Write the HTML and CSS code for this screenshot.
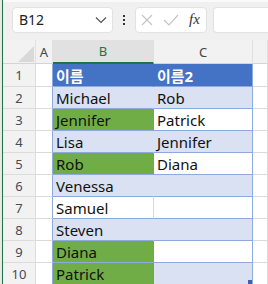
FILE: index.html
```html
<!DOCTYPE html>
<html lang="ko">
<head>
    <meta charset="UTF-8">
    <title>Sheet</title>
    <link rel="stylesheet" href="styles.css">
</head>
<body>
    <div class="app">
        <div class="edge"></div>
        <div class="main">
            <div class="formula-bar">
                <div class="name-box">
                    <span>B12</span>
                    <svg class="chevron" width="12" height="8" viewBox="0 0 12 8"><path d="M1 1.5 L6 6.5 L11 1.5" fill="none" stroke="#555" stroke-width="1.2"/></svg>
                </div>
                <div class="dots"><i></i><i></i><i></i></div>
                <div class="fn-box">
                    <svg width="14" height="14" viewBox="0 0 14 14"><path d="M2 2 L12 12 M12 2 L2 12" stroke="#c4c4c4" stroke-width="1.2"/></svg>
                    <svg width="16" height="14" viewBox="0 0 16 14"><path d="M1 7 L6 12 L15 2" fill="none" stroke="#c4c4c4" stroke-width="1.2"/></svg>
                    <span class="fx">fx</span>
                </div>
                <div class="input-box"></div>
            </div>

            <div class="row col-head">
                <div class="cell corner"><svg width="16" height="16" viewBox="0 0 16 16"><path d="M16 0 L16 16 L0 16 Z" fill="#d9d9d9"/></svg></div>
                <div class="cell">A</div>
                <div class="cell selected">B</div>
                <div class="cell">C</div>
                <div class="cell"></div>
            </div>

            <div class="row head">
                <div class="cell num">1</div>
                <div class="cell a"></div>
                <div class="cell b">이름</div>
                <div class="cell c">이름2</div>
                <div class="cell"></div>
            </div>
            <div class="row band">
                <div class="cell num">2</div>
                <div class="cell a"></div>
                <div class="cell b">Michael</div>
                <div class="cell c">Rob</div>
                <div class="cell"></div>
            </div>
            <div class="row plain">
                <div class="cell num">3</div>
                <div class="cell a"></div>
                <div class="cell b green">Jennifer</div>
                <div class="cell c">Patrick</div>
                <div class="cell"></div>
            </div>
            <div class="row band">
                <div class="cell num">4</div>
                <div class="cell a"></div>
                <div class="cell b">Lisa</div>
                <div class="cell c">Jennifer</div>
                <div class="cell"></div>
            </div>
            <div class="row plain">
                <div class="cell num">5</div>
                <div class="cell a"></div>
                <div class="cell b green">Rob</div>
                <div class="cell c">Diana</div>
                <div class="cell"></div>
            </div>
            <div class="row band">
                <div class="cell num">6</div>
                <div class="cell a"></div>
                <div class="cell b">Venessa</div>
                <div class="cell c"></div>
                <div class="cell"></div>
            </div>
            <div class="row plain">
                <div class="cell num">7</div>
                <div class="cell a"></div>
                <div class="cell b">Samuel</div>
                <div class="cell c"></div>
                <div class="cell"></div>
            </div>
            <div class="row band">
                <div class="cell num">8</div>
                <div class="cell a"></div>
                <div class="cell b">Steven</div>
                <div class="cell c"></div>
                <div class="cell"></div>
            </div>
            <div class="row plain">
                <div class="cell num">9</div>
                <div class="cell a"></div>
                <div class="cell b green">Diana</div>
                <div class="cell c"></div>
                <div class="cell"></div>
            </div>
            <div class="row band last">
                <div class="cell num">10</div>
                <div class="cell a"></div>
                <div class="cell b green">Patrick</div>
                <div class="cell c"><span class="handle"></span></div>
                <div class="cell"></div>
            </div>
        </div>
    </div>
</body>
</html>
```

FILE: styles.css
```css
* {
    box-sizing: border-box;
}

body {
    margin: 0;
    font-family: "Noto Sans", "Noto Sans CJK KR", sans-serif;
    background: #fff;
    overflow: hidden;
}

.app {
    display: flex;
    height: 284px;
}

.edge {
    width: 3px;
    flex: none;
    background: #e8e8e8;
    border-right: 1px solid #217346;
}

.main {
    flex: 1;
    min-width: 0;
}

/* formula bar */
.formula-bar {
    height: 40px;
    background: #f0f0f0;
    border-top: 2px solid #fafafa;
    display: flex;
    align-items: center;
    padding: 0 0 3px 9px;
}

.name-box {
    width: 101px;
    height: 26px;
    background: #fff;
    border: 1px solid #e2e2e2;
    border-radius: 4px;
    display: flex;
    align-items: center;
    justify-content: space-between;
    padding: 0 5px 0 6px;
    font-size: 14px;
    color: #222;
}

.dots {
    width: 22px;
    display: flex;
    flex-direction: column;
    align-items: center;
    gap: 2px;
}

.dots i {
    width: 2px;
    height: 2px;
    background: #333;
}

.fn-box {
    width: 72px;
    height: 26px;
    background: #fff;
    border: 1px solid #e2e2e2;
    border-radius: 4px;
    display: flex;
    align-items: center;
    gap: 9px;
    padding-left: 4px;
}

.fx {
    font-family: "Liberation Serif", serif;
    font-style: italic;
    font-size: 15px;
    color: #333;
    margin-left: 1px;
}

.input-box {
    flex: 1;
    height: 26px;
    margin-left: 6px;
    background: #fff;
    border: 1px solid #e2e2e2;
    border-right: none;
    border-radius: 4px 0 0 4px;
}

/* grid */
.row {
    display: grid;
    grid-template-columns: 33px 17px 101px 99px 1fr;
    height: 22px;
}

.cell {
    border-right: 1px solid #dadada;
    border-bottom: 1px solid #dadada;
    display: flex;
    align-items: center;
    font-size: 15px;
    color: #111;
    padding-left: 3px;
    white-space: nowrap;
}

.col-head {
    height: 24px;
    background: #f2f2f2;
}

.col-head .cell {
    justify-content: center;
    padding: 0;
    font-size: 13px;
    color: #444;
    border-color: #e0e0e0;
    border-bottom: 1px solid #d4d4d4;
}

.col-head .corner {
    justify-content: flex-end;
    align-items: flex-end;
    padding: 0 1px 1px 0;
}

.col-head .selected {
    background: #e1e1e1;
    color: #217346;
    border-bottom: 2px solid #217346;
}

.num {
    background: #f2f2f2;
    justify-content: center;
    padding: 0;
    font-size: 13px;
    color: #444b5c;
    border-color: #dcdcdc;
}

.row .a {
    border-right-color: #8ea9db;
}

.row .b,
.row .c {
    border-bottom-color: #8ea9db;
}

.row .c {
    border-right-color: #8ea9db;
    position: relative;
}

.head {
    height: 23px;
}

.head .b,
.head .c {
    background: #4472c4;
    color: #fff;
    font-weight: bold;
    border-right-color: #4472c4;
}

.head .c {
    border-right-color: #8ea9db;
}

.band .b,
.band .c {
    background: #d9e1f2;
}

.band .b {
    border-right-color: #d9e1f2;
}

.row .green {
    background: #70ad47;
    border-right-color: #70ad47;
}

.handle {
    position: absolute;
    right: 0;
    bottom: 0;
    width: 4px;
    height: 4px;
    background: #3f5fb0;
}
```
